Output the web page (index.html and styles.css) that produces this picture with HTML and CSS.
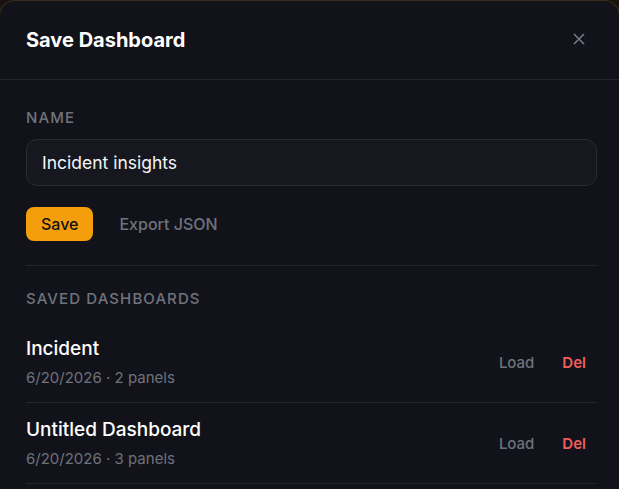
FILE: index.html
```html
<!DOCTYPE html>
<html lang="en">
<head>
<meta charset="UTF-8" />
<meta name="viewport" content="width=device-width, initial-scale=1" />
<title>Save Dashboard</title>
<link rel="stylesheet" href="styles.css">
</head>
<body>
  <div class="modal" role="dialog" aria-label="Save Dashboard">
    <div class="modal-head">
      <h1>Save Dashboard</h1>
      <button class="close" aria-label="Close">
        <svg viewBox="0 0 12 12" aria-hidden="true"><path d="M1 1l10 10M11 1L1 11"/></svg>
      </button>
    </div>
    <div class="modal-body">
      <label class="section-label" for="dashName">Name</label>
      <input id="dashName" class="name-input" type="text" value="Incident insights" />
      <div class="actions">
        <button class="btn-save">Save</button>
        <button class="btn-ghost">Export JSON</button>
      </div>
      <hr class="divider" />
      <div class="section-label">Saved Dashboards</div>
      <ul class="saved-list">
        <li class="saved-item">
          <div class="saved-info">
            <div class="saved-title">Incident</div>
            <div class="saved-meta">6/20/2026 · 2 panels</div>
          </div>
          <div class="saved-actions">
            <button class="btn-link">Load</button>
            <button class="btn-link danger">Del</button>
          </div>
        </li>
        <li class="saved-item">
          <div class="saved-info">
            <div class="saved-title">Untitled Dashboard</div>
            <div class="saved-meta">6/20/2026 · 3 panels</div>
          </div>
          <div class="saved-actions">
            <button class="btn-link">Load</button>
            <button class="btn-link danger">Del</button>
          </div>
        </li>
      </ul>
    </div>
  </div>
</body>
</html>
```

FILE: styles.css
```css
* {margin: 0; padding: 0; box-sizing: border-box;}
body {
  font-family: Inter, 'Noto Sans', sans-serif;
  background: #17140f;
  color: #f3f4f6;
  height: 100vh;
  overflow: hidden;
}
.modal {
  background: #12131a;
  border: 1px solid #3a2e1c;
  border-bottom: none;
  border-radius: 16px 16px 0 0;
  height: 100%;
  overflow: hidden;
  margin: 0 -1px;
}
.modal-head {
  display: flex;
  align-items: center;
  justify-content: space-between;
  padding: 24px 26px 23px 26px;
  border-bottom: 1px solid #24252d;
}
h1 {
  font-size: 20px;
  font-weight: 700;
  color: #ffffff;
  line-height: 31px;
}
.close {
  background: none;
  border: none;
  width: 24px;
  height: 24px;
  display: flex;
  align-items: center;
  justify-content: center;
  margin-right: 2px;
  margin-top: -3px;
  cursor: pointer;
}
.close svg {
  width: 12px;
  height: 12px;
  stroke: #7a7d87;
  stroke-width: 1.5;
  fill: none;
}
.modal-body {
  padding: 29px 22px 0 26px;
}
.section-label {
  display: block;
  font-size: 15px;
  font-weight: 500;
  letter-spacing: 1.1px;
  text-transform: uppercase;
  color: #70737c;
  line-height: 18px;
}
.name-input {
  display: block;
  width: 100%;
  margin-top: 12px;
  height: 47px;
  padding: 0 15px;
  border-radius: 11px;
  border: 1px solid #2a2b33;
  background: #17181f;
  color: #f3f4f6;
  font-family: inherit;
  font-size: 17.5px;
  outline: none;
}
.actions {
  display: flex;
  align-items: center;
  gap: 26px;
  margin-top: 21px;
}
.btn-save {
  background: #f59e0b;
  color: #111111;
  border: none;
  border-radius: 8px;
  height: 34px;
  padding: 0 15px;
  font-family: inherit;
  font-size: 16px;
  font-weight: 500;
  cursor: pointer;
}
.btn-ghost {
  background: none;
  border: none;
  color: #6f727b;
  font-family: inherit;
  font-size: 16px;
  font-weight: 500;
  cursor: pointer;
}
.divider {
  border: none;
  border-top: 1px solid #24252d;
  margin: 24px 0 24px;
}
.saved-list {
  list-style: none;
  margin-top: 14px;
}
.saved-item {
  display: flex;
  align-items: center;
  justify-content: space-between;
  padding: 14px 0 14px;
  border-bottom: 1px solid #24252d;
}
.saved-title {
  font-size: 19px;
  font-weight: 500;
  color: #ffffff;
  line-height: 26px;
}
.saved-meta {
  margin-top: 6px;
  font-size: 15px;
  color: #6f727b;
  line-height: 20px;
}
.saved-actions {
  display: flex;
  gap: 6px;
}
.btn-link {
  background: none;
  border: none;
  padding: 4px 11px;
  font-family: inherit;
  font-size: 15px;
  font-weight: 500;
  color: #6f727b;
  cursor: pointer;
}
.btn-link.danger {
  color: #f05d5d;
  font-weight: 600;
}
```
